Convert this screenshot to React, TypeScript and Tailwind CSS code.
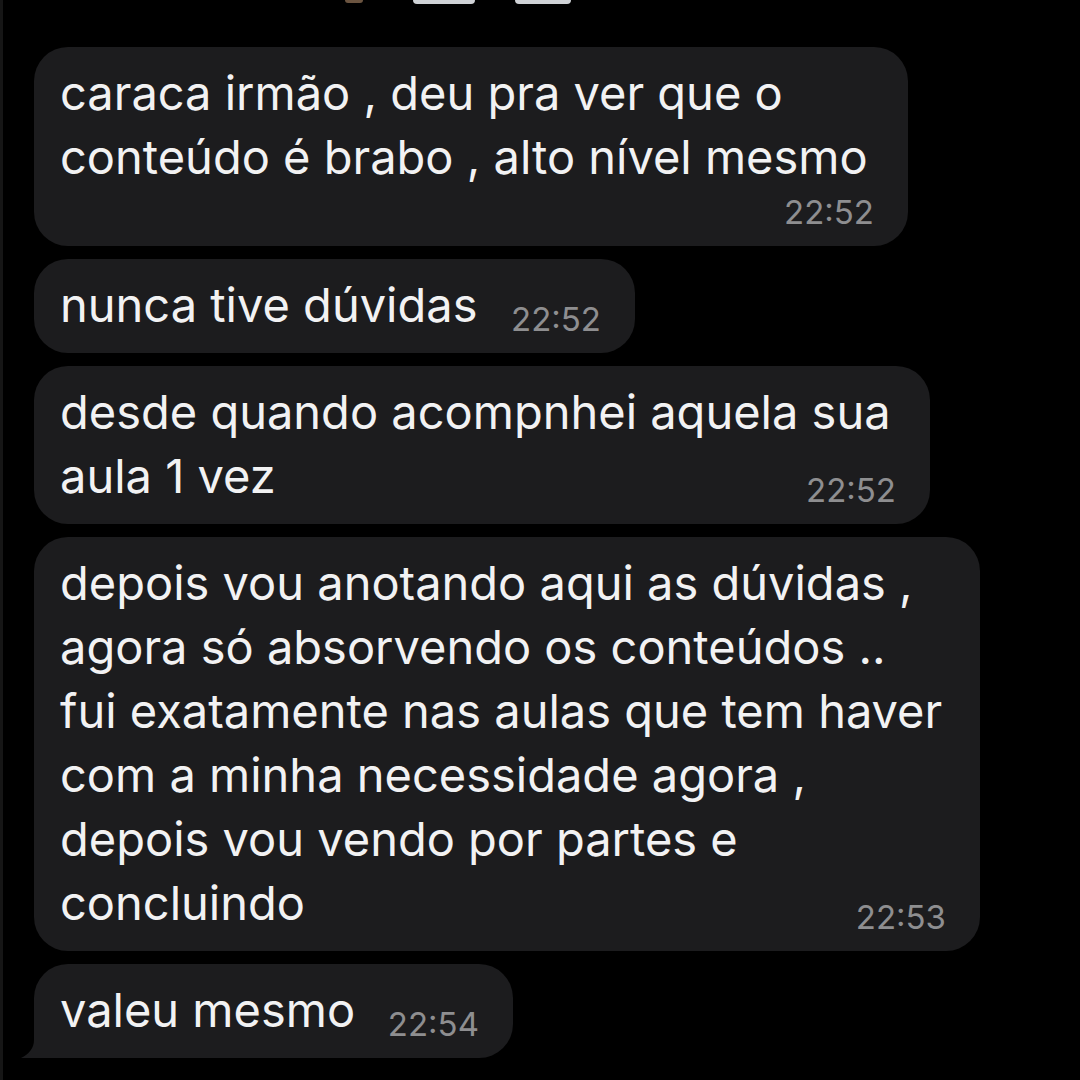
import React from 'react';

interface Message {
    lines: string[];
    time: string;
    width: string;
    timeOwnRow?: boolean;
    tail?: boolean;
}

const messages: Message[] = [
    {
        lines: ['caraca irmão , deu pra ver que o', 'conteúdo é brabo , alto nível mesmo'],
        time: '22:52',
        width: 'w-[874px]',
        timeOwnRow: true,
    },
    { lines: ['nunca tive dúvidas'], time: '22:52', width: 'w-[601px]' },
    { lines: ['desde quando acompnhei aquela sua', 'aula 1 vez'], time: '22:52', width: 'w-[896px]' },
    {
        lines: [
            'depois vou anotando aqui as dúvidas ,',
            'agora só absorvendo os conteúdos ..',
            'fui exatamente nas aulas que tem haver',
            'com a minha necessidade agora ,',
            'depois vou vendo por partes e',
            'concluindo',
        ],
        time: '22:53',
        width: 'w-[946px]',
    },
    { lines: ['valeu mesmo'], time: '22:54', width: 'w-[479px]', tail: true },
];

function Time({ value }: { value: string }) {
    return <span className="text-[33px] leading-[32px] text-[#8e8e90] mb-[2px] shrink-0">{value}</span>;
}

function Bubble({ msg }: { msg: Message }) {
    const last = msg.lines[msg.lines.length - 1];
    const rest = msg.lines.slice(0, -1);
    return (
        <div
            className={`relative ${msg.width} bg-[#1c1c1e] ${msg.tail ? 'rounded-[34px] rounded-bl-[6px]' : 'rounded-[34px]'} pl-[26px] pr-[34px] ${msg.timeOwnRow ? 'pt-[14px] pb-[16px]' : 'pt-[14px] pb-[16px]'}`}
        >
            {rest.map((line, i) => (
                <div key={i} className="leading-[64px] whitespace-nowrap">{line}</div>
            ))}
            {msg.timeOwnRow ? (
                <>
                    <div className="leading-[64px] whitespace-nowrap">{last}</div>
                    <div className="flex justify-end mt-[7px]">
                        <Time value={msg.time} />
                    </div>
                </>
            ) : (
                <div className="flex items-end justify-between">
                    <span className="leading-[64px] whitespace-nowrap">{last}</span>
                    <Time value={msg.time} />
                </div>
            )}
            {msg.tail && (
                <svg className="absolute left-[-13px] bottom-0" width="40" height="40" viewBox="0 0 40 40">
                    <path d="M13 0 L13 22 C13 30 8 36 0 40 L40 40 L40 0 Z" fill="#1c1c1e" />
                </svg>
            )}
        </div>
    );
}

export default function App() {
    return (
        <div
            className="w-[1080px] h-[1080px] bg-black border-l-[3px] border-[#161616] overflow-hidden text-[#f2f2f3] text-[47px]"
            style={{ fontFamily: 'Inter, "Noto Sans", sans-serif' }}
        >
            {/* cut-off header icons */}
            <div className="h-[4px] flex items-start">
                <div className="ml-[342px] w-[18px] h-[3px] rounded-b bg-[#6b5440]" />
                <div className="ml-[50px] w-[62px] h-[4px] rounded-b bg-[#cfd2d6]" />
                <div className="ml-[40px] w-[56px] h-[4px] rounded-b bg-[#cfd2d6]" />
            </div>
            <div className="flex flex-col gap-[13px] mt-[43px] pl-[31px]">
                {messages.map((m, i) => (
                    <Bubble key={i} msg={m} />
                ))}
            </div>
        </div>
    );
}
